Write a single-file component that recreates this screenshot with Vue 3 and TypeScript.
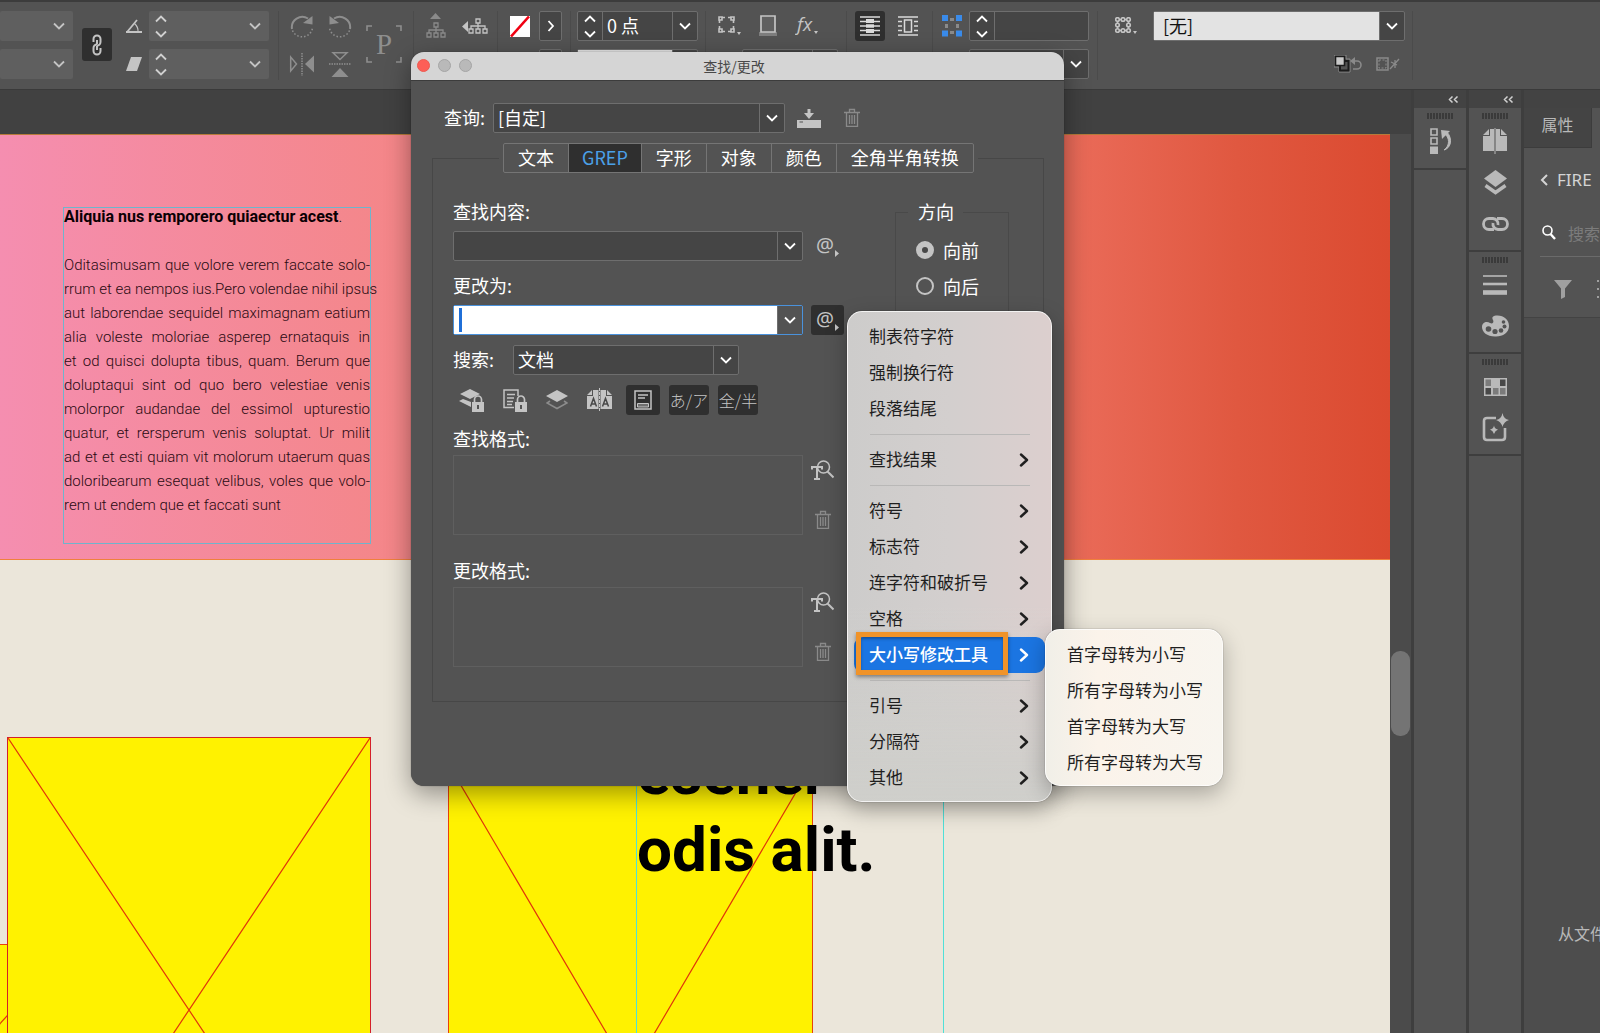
<script setup lang="ts">
import { h, ref } from 'vue'

type IconDef = [number, number, string]

const trash =
  '<g fill="none" stroke="currentColor" stroke-width="1.3"><path d="M0 4.500H16M5.500 4V1.500H10.500V4M2.500 4.500V18.400H13.500V4.500M5.500 7V16M8 7V16M10.500 7V16"/></g>'
const frameNodes =
  '<g fill="none" stroke="currentColor" stroke-width="1.6"><path d="M4 1.500H7M10 1.500H13M4 15.500H7M10 15.500H13M1.500 4V7M1.500 10V13M15.500 4V7M15.500 10V13"/><path d="M1 1H4V4H1ZM13 1H16V4H13ZM1 13H4V16H1ZM13 13H16V16H13Z"/></g>'
const book =
  '<path d="M0 7 6 1V7ZM7 1H11V23H0V8H7ZM13 1H17V8H24V23H13ZM18 1 24 7H18Z" fill="currentColor"/><path d="M12 0V26" stroke="currentColor"/>'
const rotate =
  '<path d="M2 15A10.500 10.500 0 0 1 18 4.500" fill="none" stroke="currentColor" stroke-width="2"/><path d="M22.500 2V10.500L13 9Z" fill="currentColor"/><path d="M2.500 16.500A10.500 10.500 0 0 0 22.500 14" fill="none" stroke="currentColor" stroke-width="1.500" stroke-dasharray="1.500 2"/>'

const icons: Record<string, IconDef> = {
  down: [12, 8, '<path d="M1 1.500 6 6.500 11 1.500" fill="none" stroke="currentColor" stroke-width="1.800"/>'],
  up: [12, 8, '<path d="M1 6.500 6 1.500 11 6.500" fill="none" stroke="currentColor" stroke-width="1.800"/>'],
  right: [8, 12, '<path d="M1.500 1 6 6 1.500 11" fill="none" stroke="currentColor" stroke-width="1.800"/>'],
  menuRight: [10, 14, '<path d="M2 1.500 8 7 2 12.500" fill="none" stroke="currentColor" stroke-width="2.400" stroke-linecap="round" stroke-linejoin="round"/>'],
  back: [9, 12, '<path d="M7 1 2 6 7 11" fill="none" stroke="currentColor" stroke-width="2"/>'],
  collapse: [11, 7, '<path d="M4.500.5 1.500 3.500 4.500 6.500M9.500.5 6.500 3.500 9.500 6.500" fill="none" stroke="currentColor" stroke-width="1.500"/>'],
  link: [12, 22, '<g fill="none" stroke="currentColor" stroke-width="2"><path d="M2.500 8V5A3.500 3.500 0 0 1 9.500 5V8A3.500 3.500 0 0 1 6 11.500"/><path d="M9.500 14V17A3.500 3.500 0 0 1 2.500 17V14A3.500 3.500 0 0 1 6 10.500"/><path d="M6 6V10M6 12V16"/></g>'],
  angle: [16, 14, '<g fill="none" stroke="currentColor"><path d="M0 13H16" stroke-width="2"/><path d="M1.500 12.500 11 1" stroke-width="1.800"/><path d="M8.500 4.500Q12.500 8 12 13" stroke-width="1.200"/></g>'],
  skew: [16, 14, '<path d="M5 0H16L11 14H0Z" fill="currentColor"/>'],
  rotateCw: [24, 24, rotate],
  rotateCcw: [24, 24, `<g transform="translate(24 0) scale(-1 1)">${rotate}</g>`],
  flipH: [26, 24, '<path d="M1.700 5V19L7.500 12Z" fill="none" stroke="currentColor" stroke-width="1.500"/><path d="M25 3.500V20.500L16 12Z" fill="currentColor"/><path d="M13 1V24" stroke="currentColor" stroke-width="1.500" stroke-dasharray="1.500 1"/>'],
  flipV: [24, 26, '<path d="M5 1.700H19L12 8.500Z" fill="none" stroke="currentColor" stroke-width="1.500"/><path d="M3.500 26H20.500L12 17Z" fill="currentColor"/><path d="M1 13H23" stroke="currentColor" stroke-width="1.500" stroke-dasharray="1.500 1"/>'],
  pFrame: [36, 38, '<path d="M1 6V1H6M30 1H35V6M35 32V37H30M6 37H1V32" fill="none" stroke="currentColor" stroke-width="1.600"/><text x="10" y="29" font-family="Liberation Serif, serif" font-size="29" fill="currentColor">P</text>'],
  treeUp: [20, 26, '<path d="M9.500 0 15 6H4Z" fill="currentColor"/><g fill="none" stroke="currentColor" stroke-width="1.300"><path d="M8 10H12V14H8ZM1 20H5V24H1ZM8 20H12V24H8ZM15 20H19V24H15ZM10 14V20M3 20V17H17V20"/></g>'],
  treeLeft: [26, 16, '<path d="M0 8.500 6 3V14Z" fill="currentColor"/><g fill="none" stroke="currentColor" stroke-width="1.300"><path d="M14 1H18V5H14ZM7 11H11V15H7ZM14 11H18V15H14ZM21 11H25V15H21ZM16 5V11M9 11V8H23V11"/></g>'],
  noneSwatch: [20, 21, '<path d="M0 0H20V21H0Z" fill="#fff"/><path d="M1 20.500 19 .5" stroke="#f00012" stroke-width="2.600"/>'],
  corner: [23, 20, `${frameNodes}<path d="M19 16H23L21 19Z" fill="currentColor"/>`],
  shadow: [18, 22, '<path d="M0 17H18V21H0Z" fill="#7e7e7e"/><path d="M2 1H16V17H2Z" fill="#606060" stroke="currentColor" stroke-width="1.700"/>'],
  fx: [26, 24, '<text x="2" y="17" font-family="Open Sans, sans-serif" font-style="italic" font-size="19" fill="currentColor">fx</text><path d="M19 17H23L21 20Z" fill="currentColor"/>'],
  wrapNone: [20, 20, '<path d="M0 1H20M0 19H20M0 5.500H6M14 5.500H20M0 10H6M14 10H20M0 14.500H6M14 14.500H20" stroke="currentColor" stroke-width="1.500"/><path d="M6 3H14V17H6Z" fill="currentColor"/><path d="M6 7.700H14M6 12.300H14" stroke="#2f2f2f" stroke-width="1.200"/>'],
  wrapBox: [20, 20, '<path d="M0 1H20M0 19H20M0 5.500H4M16 5.500H20M0 10H4M16 10H20M0 14.500H4M16 14.500H20" stroke="currentColor" stroke-width="1.500"/><path d="M6.500 4H13.500V16H6.500Z" fill="none" stroke="currentColor" stroke-width="1.500"/>'],
  fit: [20, 22, '<path d="M8 4.500H12M8 17.500H12M4.500 9V13M15.500 9V13" fill="none" stroke="#8a8a8a" stroke-width="3"/><path d="M0 0H6V6H0ZM14 0H20V6H14ZM0 15.500H6V21.500H0ZM14 15.500H20V21.500H14Z" fill="#3a8bea"/>'],
  dots: [22, 19, '<g fill="none" stroke="currentColor" stroke-width="1.600"><circle cx="2.500" cy="2.500" r="1.800"/><circle cx="8" cy="2.500" r="1.800"/><circle cx="13.500" cy="2.500" r="1.800"/><circle cx="2.500" cy="8" r="1.800"/><circle cx="13.500" cy="8" r="1.800"/><circle cx="2.500" cy="13.500" r="1.800"/><circle cx="8" cy="13.500" r="1.800"/><circle cx="13.500" cy="13.500" r="1.800"/><path d="M4.500 2.500H6M10 2.500H11.500M4.500 13.500H6M10 13.500H11.500M2.500 4.500V6M2.500 10V11.500M13.500 4.500V6M13.500 10V11.500"/></g><path d="M18 14H22L20 17Z" fill="currentColor"/>'],
  clearStyle: [28, 18, '<path d="M0 0H12V4H16V17H5V12H0Z" fill="none" stroke="#8a8a8a"/><path d="M6 6H14.500V15.500H6Z" fill="none" stroke="#1c1c1c" stroke-width="2"/><path d="M1.500 1.500H10.500V10.500H1.500Z" fill="#c8c8c8" stroke="#1c1c1c" stroke-width="1.600"/><path d="M18 6H23A4 4 0 0 1 23 14H19" fill="none" stroke="#8a8a8a" stroke-width="1.600"/><path d="M16 6 21 2V10Z" fill="#8a8a8a"/>'],
  clearFrame: [24, 14, '<path d="M1 1H12V13H1Z" fill="none" stroke="currentColor" stroke-width="1.500"/><path d="M3 3H10V11H3Z" fill="none" stroke="currentColor" stroke-dasharray="2 1.500"/><path d="M14 12 23 2M15 5 21 8M19 3V11" stroke="currentColor" stroke-width="1.300"/>'],
  save: [24, 19, '<path d="M0 11H24V19H0Z" fill="currentColor"/><path d="M2.500 13H6" stroke="#535353" stroke-width="1.200"/><path d="M12 0V5" stroke="currentColor" stroke-width="3"/><path d="M7 4H17L12 10Z" fill="currentColor"/>'],
  trash: [16, 20, trash],
  at: [24, 22, '<text x="0" y="16" font-family="Noto Sans, sans-serif" font-size="20" fill="currentColor">@</text><path d="M19 14 23 17.500 19 21Z" fill="currentColor"/>'],
  lockLayer: [25, 23, '<path d="M11 0 21 5 11 10 1 5Z" fill="currentColor"/><path d="M0 12 4 10 12 13V18Z" fill="currentColor"/><path d="M13 13H25V23H13Z" fill="currentColor"/><path d="M15.500 13V10.500A3.500 3.500 0 0 1 22.500 10.500V13" fill="none" stroke="currentColor" stroke-width="1.700"/><path d="M19 16V20" stroke="#535353" stroke-width="2"/>'],
  lockStory: [24, 23, '<path d="M11 18.500H1V1H15V7M4 5.500H12M4 9H11M4 12.500H10M4 15.500H9" fill="none" stroke="currentColor" stroke-width="1.500"/><path d="M12 13H24V23H12Z" fill="currentColor"/><path d="M14.500 13V10.500A3.500 3.500 0 0 1 21.500 10.500V13" fill="none" stroke="currentColor" stroke-width="1.700"/><path d="M18 16V20" stroke="#535353" stroke-width="2"/>'],
  layers: [22, 20, '<path d="M11 0 22 6 11 12 0 6Z" fill="currentColor"/><path d="M4 11 1 13 11 18.500 21 13 18 11" fill="none" stroke="#8c8c8c" stroke-width="1.600"/>'],
  master: [25, 24, '<path d="M0 7 5 2V7ZM6 2H11.500V21H0V8H6ZM13.500 2H19V8H25V21H13.500ZM20 2 25 7H20Z" fill="currentColor"/><path d="M12.500 0V24" stroke="currentColor" stroke-dasharray="3 1"/><path d="M3.500 18.500 6.500 10.500 9.500 18.500M4.500 16H8.500M15.500 18.500 18.500 10.500 21.500 18.500M16.500 16H20.500" fill="none" stroke="#484848" stroke-width="1.500"/>'],
  footnote: [18, 20, '<path d="M1 1H17V19H1Z" fill="none" stroke="currentColor" stroke-width="1.500"/><path d="M4 5H14M4 8H11" stroke="currentColor" stroke-width="1.400"/><path d="M3.500 13.500H14.500V17H3.500Z" fill="#6f6f6f" stroke="currentColor"/>'],
  findFormat: [23, 20, '<circle cx="12.500" cy="7" r="6" fill="none" stroke="currentColor" stroke-width="1.500"/><path d="M16.500 11.500 22.500 17.500" stroke="currentColor" stroke-width="2"/><path d="M1 9.500V7H11V9.500M6 7V19M3 19H9" fill="none" stroke="currentColor" stroke-width="2"/>'],
  history: [21, 27, '<path d="M1 1H7V7H1ZM1 10H7V16H1Z" fill="none" stroke="currentColor" stroke-width="1.600"/><path d="M0 18.500H8V26H0Z" fill="currentColor"/><path d="M11 2 20 3 12 11Z" fill="currentColor"/><path d="M14 5.500C20 9 20 18 14 22C21 20 23 11 17 4Z" fill="currentColor" stroke="currentColor"/>'],
  pages: [24, 27, book],
  layerStack: [23, 25, '<path d="M11.500 0 23 8.500 11.500 17 0 8.500Z" fill="currentColor"/><path d="M1.500 15.500 11.500 22.500 21.500 15.500" fill="none" stroke="currentColor" stroke-width="3.500"/>'],
  links: [27, 14, '<g fill="none" stroke="currentColor" stroke-width="2.800"><path d="M12 12.500H7A5.500 5.500 0 0 1 7 1.500H11A5.500 5.500 0 0 1 16 8"/><path d="M15 1.500H20A5.500 5.500 0 0 1 20 12.500H16A5.500 5.500 0 0 1 11 6"/></g>'],
  stroke: [24, 20, '<path d="M0 1H24" stroke="currentColor" stroke-width="1.600"/><path d="M0 9H24" stroke="currentColor" stroke-width="2.600"/><path d="M0 17.500H24" stroke="currentColor" stroke-width="4.600"/>'],
  palette: [27, 22, '<path d="M12 1C20-1 27 4 27 11C27 18 20 22 13 21.500C5 21.500 0 17 0 12C0 7 5 6 8 8C11 9.500 12 7 11 5C10 3 10 2 12 1Z" fill="currentColor"/><g fill="#535353"><circle cx="6.500" cy="14" r="2.800"/><circle cx="13" cy="16.500" r="2.600"/><circle cx="19" cy="15.500" r="2.300"/><circle cx="22.500" cy="11.500" r="2"/><circle cx="21.500" cy="7" r="1.800"/></g>'],
  swatches: [23, 18, '<path d="M0 0H23V18H0Z" fill="currentColor"/><path d="M1.500 1.500H7V8H1.500ZM9 10H14.500V16.500H9ZM16 10H21.500V16.500H16Z" fill="#7b7b7b"/><path d="M16 1.500H21.500V8H16ZM1.500 10H7V16.500H1.500Z" fill="#484848"/>'],
  generate: [27, 29, '<path d="M14 5H5Q2 5 2 8V24Q2 27 5 27H20Q23 27 23 24V15" fill="none" stroke="currentColor" stroke-width="2.600"/><path d="M20.500 0Q21.500 6 27 7Q22 8.500 20.500 14Q19 8.500 14 7Q19.500 6 20.500 0ZM12 12.500Q12.500 16 16 16.500Q13 17.500 12 21Q11 17.500 8 16.500Q11.500 16 12 12.500Z" fill="currentColor"/>'],
  search: [14, 15, '<circle cx="5.500" cy="5.500" r="4.500" fill="none" stroke="currentColor" stroke-width="1.600"/><path d="M8.500 9 13 14" stroke="currentColor" stroke-width="2.400"/>'],
  filter: [18, 19, '<path d="M0 0H18L11 8.500V17L7 19V8.500Z" fill="currentColor"/>'],
  list: [18, 20, '<path d="M0 2H2M0 10H2M0 18H2M5 2H18M5 10H18M5 18H18" stroke="currentColor" stroke-width="2"/>'],
}

const Icon = (props: { name: string }) => {
  const [w, hgt, body] = icons[props.name]
  return h('svg', { width: w, height: hgt, viewBox: `0 0 ${w} ${hgt}`, 'aria-hidden': 'true', style: 'display:block;flex:none', innerHTML: body })
}
Icon.props = ['name']

const tabs = ['文本', 'GREP', '字形', '对象', '颜色', '全角半角转换']
const activeTab = ref('GREP')
const direction = ref('forward')
const findText = ref('')
const changeText = ref('')

interface MenuItem { label: string; sub?: boolean; active?: boolean }
const menuGroups: MenuItem[][] = [
  [{ label: '制表符字符' }, { label: '强制换行符' }, { label: '段落结尾' }],
  [{ label: '查找结果', sub: true }],
  [
    { label: '符号', sub: true },
    { label: '标志符', sub: true },
    { label: '连字符和破折号', sub: true },
    { label: '空格', sub: true },
    { label: '大小写修改工具', sub: true, active: true },
  ],
  [{ label: '引号', sub: true }, { label: '分隔符', sub: true }, { label: '其他', sub: true }],
]
const caseItems = ['首字母转为小写', '所有字母转为小写', '首字母转为大写', '所有字母转为大写']

const story = [
  'Oditasimusam que volore verem faccate solo-',
  'rrum et ea nempos ius.Pero volendae nihil ipsus',
  'aut laborendae sequidel maximagnam eatium',
  'alia voleste moloriae asperep ernataquis in',
  'et od quisci dolupta tibus, quam. Berum que',
  'doluptaqui sint od quo bero velestiae venis',
  'molorpor audandae del essimol upturestio',
  'quatur, et rersperum venis soluptat. Ur milit',
  'ad et et esti quiam vit molorum utaerum quas',
  'doloribearum esequat velibus, voles que volo-',
  'rem ut endem que et faccati sunt',
]

const dockGroups = [['pages', 'layerStack', 'links'], ['stroke', 'palette'], ['swatches', 'generate']]
</script>

<template>
  <div class="app">
    <header class="toolbar">
      <div class="group g-transform">
        <div class="stack">
          <label v-for="n in 2" :key="n" class="flat scale"><select aria-label="缩放"><option></option></select><Icon name="down" /></label>
        </div>
        <button class="dark link-btn" aria-label="约束缩放比例"><Icon name="link" /></button>
        <div class="stack glyphs"><span><Icon name="angle" /></span><span><Icon name="skew" /></span></div>
        <div class="stack">
          <div v-for="n in 2" :key="n" class="flat spinner">
            <span class="spin"><button aria-label="增加"><Icon name="up" /></button><button aria-label="减少"><Icon name="down" /></button></span>
            <input aria-label="角度" /><Icon name="down" />
          </div>
        </div>
      </div>
      <div class="group g-rotate">
        <div class="quad">
          <button aria-label="顺时针旋转"><Icon name="rotateCw" /></button><button aria-label="逆时针旋转"><Icon name="rotateCcw" /></button>
          <button aria-label="水平翻转"><Icon name="flipH" /></button><button aria-label="垂直翻转"><Icon name="flipV" /></button>
        </div>
        <Icon name="pFrame" />
      </div>
      <div class="group g-tree"><button class="dim" aria-label="选择容器"><Icon name="treeUp" /></button><button aria-label="选择上一对象"><Icon name="treeLeft" /></button></div>
      <div class="group g-fill">
        <div v-for="n in 2" :key="n" class="line"><Icon name="noneSwatch" /><button class="box" aria-label="展开"><Icon name="right" /></button></div>
      </div>
      <div class="group g-stroke">
        <div class="combo bar">
          <span class="spin"><button aria-label="增加"><Icon name="up" /></button><button aria-label="减少"><Icon name="down" /></button></span>
          <input value="0 点" aria-label="描边粗细" /><button class="arrow" aria-label="选择粗细"><Icon name="down" /></button>
        </div>
        <div class="combo bar light"><input aria-label="描边类型" /><button class="arrow" aria-label="选择类型"><Icon name="down" /></button></div>
      </div>
      <div class="group g-effects">
        <div class="line"><button aria-label="角选项"><Icon name="corner" /></button><button aria-label="投影"><Icon name="shadow" /></button><button aria-label="效果"><Icon name="fx" /></button></div>
        <div class="combo bar opacity"><input aria-label="不透明度" /><button class="arrow" aria-label="选择不透明度"><Icon name="down" /></button></div>
      </div>
      <div class="group g-wrap"><button class="dark wrap-btn" aria-label="无文本绕排"><Icon name="wrapNone" /></button><button aria-label="沿定界框绕排"><Icon name="wrapBox" /></button></div>
      <div class="group g-fit">
        <button aria-label="自动调整"><Icon name="fit" /></button>
        <div class="stack">
          <div class="combo bar"><span class="spin"><button aria-label="增加"><Icon name="up" /></button><button aria-label="减少"><Icon name="down" /></button></span><input aria-label="角大小" /></div>
          <div class="combo bar"><input aria-label="角形状" /><button class="arrow" aria-label="选择形状"><Icon name="down" /></button></div>
        </div>
      </div>
      <div class="group g-style">
        <div class="line">
          <Icon name="dots" />
          <div class="combo bar light"><select aria-label="对象样式"><option>[无]</option></select><span class="arrow"><Icon name="down" /></span></div>
        </div>
        <div class="line tools"><button aria-label="清除优先选项"><Icon name="clearStyle" /></button><button aria-label="清除未定义属性"><Icon name="clearFrame" /></button></div>
      </div>
      <div class="group"></div>
    </header>

    <main class="workspace">
      <section class="document">
        <div class="rulerbar"></div>
        <div class="view">
          <div class="pasteboard">
            <div class="banner">
              <article class="textframe">
                <h2><b>Aliquia nus remporero quiaectur acest</b>.</h2>
                <p><span v-for="t in story" :key="t">{{ t }}</span></p>
              </article>
            </div>
            <svg class="frame f0" viewBox="0 0 100 100" preserveAspectRatio="none"><path d="M0 100 100 0" /></svg>
            <svg class="frame f1" viewBox="0 0 100 100" preserveAspectRatio="none"><path d="M0 0 100 100M0 100 100 0" /></svg>
            <svg class="frame f2" viewBox="0 0 100 100" preserveAspectRatio="none"><path d="M0 0 100 100M0 100 100 0" /></svg>
            <div class="headline">esener<br />odis alit.</div>
          </div>
          <div class="scrollbar"><div class="thumb"></div></div>
        </div>
      </section>

      <aside class="dock">
        <div class="dock-head"><Icon name="collapse" /></div>
        <div class="dock-group"><i class="grip"></i><button aria-label="历史记录"><Icon name="history" /></button></div>
      </aside>
      <aside class="dock">
        <div class="dock-head"><Icon name="collapse" /></div>
        <div v-for="(g, i) in dockGroups" :key="i" class="dock-group">
          <i class="grip"></i><button v-for="n in g" :key="n" :aria-label="n"><Icon :name="n" /></button>
        </div>
      </aside>
      <aside class="props">
        <div class="dock-head"></div>
        <div class="prop-tabs"><button>属性</button></div>
        <div class="prop-body">
          <div class="crumb"><Icon name="back" /><span>FIRE</span></div>
          <label class="find"><Icon name="search" /><input placeholder="搜索" aria-label="搜索" /></label>
          <div class="filters"><Icon name="filter" /><Icon name="list" /></div>
        </div>
        <p class="hint">从文件</p>
      </aside>
    </main>

    <section class="dialog" role="dialog" aria-label="查找/更改">
      <div class="titlebar"><i class="light-red"></i><i></i><i></i><h1>查找/更改</h1></div>
      <div class="query">
        <label for="query">查询:</label>
        <div class="combo"><select id="query"><option>[自定]</option></select><span class="arrow"><Icon name="down" /></span></div>
        <button class="save" aria-label="存储查询"><Icon name="save" /></button>
        <button class="dim" aria-label="删除查询"><Icon name="trash" /></button>
      </div>
      <fieldset class="panel">
        <legend>
          <span class="tabs"><button v-for="t in tabs" :key="t" :class="{ on: t === activeTab }" @click="activeTab = t">{{ t }}</button></span>
        </legend>
        <div class="form">
          <label for="find">查找内容:</label>
          <div class="row">
            <div class="combo wide"><input id="find" v-model="findText" /><button class="arrow" aria-label="最近查找"><Icon name="down" /></button></div>
            <button class="at" aria-label="要搜索的特殊字符"><Icon name="at" /></button>
          </div>
          <label class="second" for="change">更改为:</label>
          <div class="row">
            <div class="combo wide focus"><input id="change" v-model="changeText" /><i class="caret"></i><button class="arrow" aria-label="最近更改"><Icon name="down" /></button></div>
            <button class="at dark" aria-label="要替换的特殊字符"><Icon name="at" /></button>
          </div>
          <div class="row scope">
            <label for="scope">搜索:</label>
            <div class="combo"><select id="scope"><option>文档</option></select><span class="arrow"><Icon name="down" /></span></div>
          </div>
          <div class="row options">
            <button aria-label="包括锁定图层"><Icon name="lockLayer" /></button>
            <button aria-label="包括锁定文章"><Icon name="lockStory" /></button>
            <button aria-label="包括隐藏图层"><Icon name="layers" /></button>
            <button aria-label="包括主页"><Icon name="master" /></button>
            <button class="dark foot" aria-label="包括脚注"><Icon name="footnote" /></button>
            <button class="dark kana">あ/ア</button>
            <button class="dark kana">全/半</button>
          </div>
          <template v-for="f in ['查找格式:', '更改格式:']" :key="f">
            <div class="format-label">{{ f }}</div>
            <div class="row format">
              <div class="format-box"></div>
              <div class="format-tools"><button aria-label="指定属性"><Icon name="findFormat" /></button><button class="dim" aria-label="清除属性"><Icon name="trash" /></button></div>
            </div>
          </template>
        </div>
        <fieldset class="direction">
          <legend>方向</legend>
          <label><input v-model="direction" type="radio" name="dir" value="forward" />向前</label>
          <label><input v-model="direction" type="radio" name="dir" value="back" />向后</label>
        </fieldset>
      </fieldset>
    </section>

    <nav class="menu main-menu" aria-label="特殊字符">
      <template v-for="(g, i) in menuGroups" :key="i">
        <hr v-if="i" />
        <button v-for="m in g" :key="m.label" :class="{ active: m.active }">
          <span>{{ m.label }}</span><Icon v-if="m.sub" name="menuRight" /><i v-if="m.active" class="callout"></i>
        </button>
      </template>
    </nav>
    <nav class="menu sub-menu" aria-label="大小写修改工具">
      <button v-for="c in caseItems" :key="c"><span>{{ c }}</span></button>
    </nav>
  </div>
</template>

<style>
body { margin: 0; background: #535353; }
</style>

<style scoped>
* { box-sizing: border-box; }
.app { position: relative; display: flex; flex-direction: column; height: 100vh; overflow: hidden; background: #535353; color: #c4c4c4; font: 18px/24px "Noto Sans CJK SC", sans-serif; }
button { display: grid; place-items: center; margin: 0; padding: 0; border: 0; background: none; color: inherit; font: inherit; }
input, select { min-width: 0; margin: 0; padding: 0; border: 0; outline: 0; background: none; color: inherit; font: inherit; appearance: none; }
.dark { background: #2f2f2f; border-radius: 3px; }
.dim { color: #8a8a8a; }

.toolbar { display: flex; flex: none; height: 90px; padding: 9px 0; border-top: 2px solid #3c3c3c; border-bottom: 1px solid #3a3a3a; overflow: hidden; }
.group { display: flex; flex: none; align-items: flex-start; border-left: 1px solid #4b4b4b; }
.stack { display: flex; flex-direction: column; gap: 8px; }
.line { display: flex; align-items: center; height: 30px; }
.flat { display: flex; align-items: center; height: 30px; padding-right: 8px; background: #5f5f5f; border-radius: 2px; }
.flat select, .flat input { flex: 1; }
.scale { width: 73px; }
.spinner { width: 120px; }
.spin { display: flex; flex: none; flex-direction: column; align-items: center; justify-content: center; gap: 7px; width: 24px; color: #fff; }
.flat .spin { color: #d0d0d0; }
.g-transform { width: 278px; border-left: 0; }
.link-btn { width: 30px; height: 33px; margin: 17px 14px 0 9px; }
.glyphs { width: 23px; }
.glyphs span { display: flex; align-items: center; height: 30px; }
.g-rotate { width: 135px; padding-left: 4px; color: #8e8e8e; }
.g-rotate > svg { margin: 14px 0 0 7px; }
.quad { display: grid; grid-template-columns: 38px 38px; grid-template-rows: 29px 48px; }
.g-tree { width: 84px; padding-left: 12px; gap: 16px; }
.g-tree button { height: 30px; }
.g-fill { flex-direction: column; gap: 8px; width: 73px; padding-left: 12px; }
.g-fill .line { gap: 9px; }
.box { width: 23px; height: 30px; border: 1px solid #6e6e6e; border-radius: 2px; background: #454545; color: #fff; }
.g-stroke { flex-direction: column; gap: 8px; width: 135px; padding-left: 6px; }
.g-stroke .bar { width: 121px; }
.g-effects { flex-direction: column; gap: 8px; width: 141px; padding-left: 12px; }
.g-effects .line { gap: 18px; }
.opacity { width: 96px; margin-left: 24px; }
.g-wrap { width: 86px; padding-left: 8px; gap: 13px; color: #dadada; }
.g-wrap button { height: 30px; }
.g-wrap .wrap-btn { width: 30px; }
.g-fit { width: 165px; padding-left: 9px; gap: 7px; }
.g-fit > button { height: 30px; }
.g-fit .bar { width: 120px; }
.g-style { flex-direction: column; gap: 8px; width: 315px; padding-left: 17px; }
.g-style .line { gap: 16px; width: 290px; }
.g-style .bar { flex: 1; }
.g-style .tools { justify-content: flex-end; gap: 14px; width: 285px; color: #8a8a8a; }

.combo { position: relative; display: flex; height: 30px; border: 1px solid #6e6e6e; border-radius: 2px; background: #454545; color: #fff; }
.combo select, .combo input { flex: 1; padding: 0 0 2px 4px; }
.combo .spin + input { border-left: 1px solid #6e6e6e; }
.arrow { display: grid; flex: none; place-items: center; width: 25px; border-left: 1px solid #6e6e6e; color: #fff; }
.light select, .light input { background: #e3e3e3; color: #111; padding-left: 9px; }

.workspace { display: flex; flex: 1; min-height: 0; }
.document { display: flex; flex: 1; flex-direction: column; min-width: 0; }
.rulerbar { flex: none; height: 44px; background: #414141; }
.view { display: flex; flex: 1; min-height: 0; }
.pasteboard { position: relative; flex: 1; overflow: hidden; background: #ebe6da; }
.banner { height: 426px; padding: 72px 0 0 63px; border-top: 1px solid #b67a3a; border-bottom: 1px solid #f0803c; background: linear-gradient(90deg, #f58eb0, #f48688 29%, #ea6b59 77%, #e05840 89%, #db4a30); }
.textframe { width: 308px; height: 337px; border: 1px solid #6fb4cc; color: #2a0a12; font: 300 15px/24px Roboto, sans-serif; }
.textframe h2 { margin: -3px 0 24px; color: #0a0004; font: inherit; font-size: 16px; white-space: nowrap; }
.textframe b { font-weight: 700; }
.textframe p { margin: 0; }
.textframe span { display: block; text-align: justify; text-align-last: justify; white-space: nowrap; }
.textframe span:last-child { text-align-last: left; }
.frame { position: absolute; border: 1px solid #e8420a; background: #fff200; }
.frame path { fill: none; stroke: #e0360a; stroke-width: 1.2px; vector-effect: non-scaling-stroke; }
.f0 { left: -356px; top: 810px; width: 429px; height: 468px; }
.f1 { left: 7px; top: 603px; width: 364px; height: 546px; border-color: #d4202a; }
.f2 { left: 448px; top: 630px; width: 365px; height: 620px; }
.headline { position: absolute; left: 636px; top: 599px; width: 308px; height: 500px; border: 1px solid #4fe0d8; color: #000; font: 700 62px/77px Roboto, sans-serif; white-space: nowrap; }
.scrollbar { flex: none; width: 21px; padding: 517px 1px 0; background: #4b4b4b; }
.thumb { height: 85px; border-radius: 9px; background: #747474; }

.dock { flex: none; width: 55px; border-left: 3px solid #3e3e3e; }
.dock-head { display: flex; align-items: center; justify-content: flex-end; height: 18px; padding-right: 7px; background: #434343; color: #d0d0d0; }
.dock-group { display: flex; flex-direction: column; align-items: center; padding: 5px 0 6px; border-bottom: 2px solid #3e3e3e; color: #b9b9b9; }
.dock-group button { width: 52px; height: 41px; }
.grip { width: 27px; height: 6px; margin-bottom: 2px; background: repeating-linear-gradient(90deg, #3a3a3a 0 2px, #535353 2px 3px); }
.dock-group + .dock-group .grip { margin-bottom: 1px; }
.props { flex: 0 0 79px; width: 79px; border-left: 3px solid #3e3e3e; background: #4d4d4d; overflow: hidden; white-space: nowrap; }
.prop-tabs { height: 40px; background: #535353; }
.prop-tabs button { width: 68px; height: 40px; padding-bottom: 8px; border-bottom: 1px solid #3c3c3c; border-right: 1px solid #3c3c3c; background: #444; color: #b8b8b8; font-size: 16px; line-height: 24px; }
.prop-body { height: 170px; padding: 20px 0 0 16px; border-bottom: 1px solid #434343; background: #535353; }
.crumb { display: flex; align-items: center; gap: 8px; height: 24px; font: 17px/24px "Noto Sans", sans-serif; color: #d4d4d4; }
.find { display: flex; align-items: center; gap: 12px; height: 48px; margin-top: 17px; padding-left: 2px; border-bottom: 1px solid #6b6b6b; color: #fff; }
.find input { width: 60px; font-size: 16px; }
.find input::placeholder { color: #7c7c7c; opacity: 1; }
.filters { display: flex; align-items: center; gap: 25px; height: 64px; padding-left: 14px; color: #a0a0a0; }
.hint { margin: 603px 0 0 34px; font-size: 16px; color: #b8b8b8; }

.dialog { position: absolute; left: 411px; top: 52px; width: 653px; height: 734px; border-radius: 13px; background: #535353; box-shadow: 0 8px 26px rgba(0, 0, 0, .38), 0 0 1px rgba(0, 0, 0, .6); color: #fff; overflow: hidden; }
.titlebar { display: flex; align-items: center; gap: 8px; height: 29px; padding: 0 0 1px 6px; border-bottom: 1px solid #3c3c3c; background: #d5d5d5; }
.titlebar i { width: 13px; height: 13px; border: 1px solid #a5a5a5; border-radius: 50%; background: #b9b9b9; }
.titlebar .light-red { border-color: #ec5a50; background: #fd5f57; }
.titlebar h1 { flex: 1; margin: 0 76px 0 0; color: #484848; font-size: 14px; font-weight: 400; text-align: center; }
.query { display: flex; align-items: center; margin: 22px 0 10px 33px; }
.query label, .scope label { padding-bottom: 2px; }
.query label { width: 49px; }
.query .combo { width: 292px; margin-right: 12px; }
.save { color: #c4c4c4; margin-right: 23px; }
.panel { display: flex; align-items: flex-start; width: 612px; margin: 0 0 0 21px; padding: 0 0 34px 20px; border: 1px solid #474747; }
.panel > legend { margin-left: 46px; padding: 0 4px; }
.tabs { display: flex; height: 30px; border: 1px solid #757575; border-radius: 2px; }
.tabs button { padding: 0 14px 2px; }
.tabs button + button { border-left: 1px solid #757575; }
.tabs .on { padding: 0 13px 2px; background: #2f2f2f; color: #4ba0e8; }
.form { display: flex; flex-direction: column; width: 392px; padding-top: 26px; }
.form > label { margin-bottom: 8px; }
.form > .second { margin-top: 12px; }
.row { display: flex; align-items: center; height: 30px; }
.wide { width: 350px; }
.at { width: 33px; height: 30px; margin-left: 8px; padding-top: 2px; color: #c4c4c4; }
.focus { border-color: #4a92dc; }
.focus input { background: #fff; color: #000; }
.focus .arrow { background: #535353; }
.caret { position: absolute; left: 5px; top: 2px; width: 3px; height: 24px; background: #1f6fd8; }
.scope { margin-top: 10px; }
.scope label { width: 60px; }
.scope .combo { width: 226px; }
.options { margin: 10px 0 11px 6px; color: #c4c4c4; gap: 19px; }
.options .foot { width: 34px; height: 30px; margin-left: -5px; }
.options .kana { width: 40px; height: 30px; margin-left: -10px; font-size: 16px; font-weight: 300; }
.format-label { margin-bottom: 5px; }
.format { align-items: flex-start; height: 103px; }
.format:last-child { height: 80px; }
.format-box { width: 350px; height: 80px; border: 1px solid #5f5f5f; }
.format-tools { display: flex; flex-direction: column; align-items: center; gap: 30px; width: 39px; padding-top: 5px; color: #c4c4c4; }
.direction { display: flex; flex-direction: column; gap: 12px; width: 114px; height: 130px; margin: 26px 0 0 50px; padding: 13px 0 0 20px; border: 1px solid #494949; }
.direction legend { padding: 0 9px 2px 10px; margin-left: -8px; }
.direction label { display: flex; align-items: center; gap: 9px; }
.direction input { width: 18px; height: 18px; border: 2px solid #c4c4c4; border-radius: 50%; }
.direction input:checked { border-width: 6px; background: #484848; }

.menu { position: absolute; display: flex; flex-direction: column; border: 1px solid rgba(255, 255, 255, .75); border-radius: 15px; font-size: 17px; color: #1f1f1f; }
.menu button { position: relative; display: flex; align-items: center; justify-content: space-between; flex: none; height: 36px; margin: 0 6px; padding: 0 16px 0 15px; white-space: nowrap; }
.menu span { padding-bottom: 2px; }
.menu hr { width: 160px; height: 1px; margin: 7px auto; border: 0; background: #b9b8b7; }
.main-menu { left: 847px; top: 311px; width: 205px; padding: 7px 0 5px; background: linear-gradient(0deg, #cfcfcb, rgba(207, 207, 203, 0) 40%), linear-gradient(90deg, #cdcccb, #d3cfce 50%, #dccfce); box-shadow: 0 8px 22px rgba(0, 0, 0, .28), 0 0 1px rgba(0, 0, 0, .7); }
.menu .active { border-radius: 9px; background: #1b75e2; color: #fff; font-weight: 500; }
.callout { position: absolute; left: 2px; top: -5px; width: 152px; height: 43px; border: 5px solid #f09329; box-shadow: 0 2px 4px rgba(0, 0, 0, .4), inset 0 2px 3px rgba(0, 0, 0, .3); }
.sub-menu { left: 1045px; top: 629px; width: 178px; padding: 7px 0 4px; background: linear-gradient(90deg, #f1efe8, #fbf3ea 30%, #f8f5ef); box-shadow: 0 8px 22px rgba(0, 0, 0, .28), 0 0 1px rgba(0, 0, 0, .7); }
</style>
